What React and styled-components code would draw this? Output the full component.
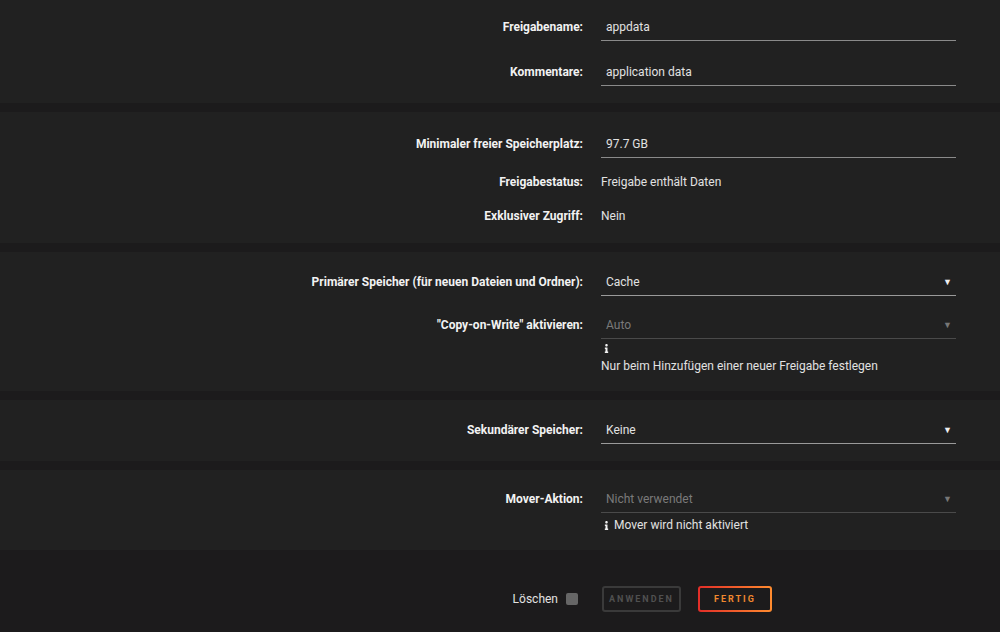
import styled, { createGlobalStyle } from "styled-components"
import { FaInfo } from "react-icons/fa"

const GlobalStyle = createGlobalStyle`
    html, body {
        margin: 0;
        padding: 0;
        background-color: #1c1b1c;
        font-family: Roboto, "Noto Sans", sans-serif;
    }
`

function Field({ label, value }) {
    return (
        <Row>
            <Label>{label}:</Label>
            <Input defaultValue={value} />
        </Row>
    )
}

function Picker({ label, value, disabled, children }) {
    return (
        <Row>
            <Label>{label}:</Label>
            <div>
                <Select disabled={disabled}>
                    <span>{value}</span>
                    <Arrow disabled={disabled}>▼</Arrow>
                </Select>
                {children}
            </div>
        </Row>
    )
}

function Plain({ label, value }) {
    return (
        <Row short>
            <Label short>{label}:</Label>
            <Value>{value}</Value>
        </Row>
    )
}

export default function App() {
    return (
        <>
            <GlobalStyle />
            <Page>
                <Section top={13} gap={17}>
                    <Field label="Freigabename" value="appdata" />
                    <Field label="Kommentare" value="application data" />
                </Section>
                <Section top={18} gap={15} bottom={17}>
                    <Field label="Minimaler freier Speicherplatz" value="97.7 GB" />
                    <Plain label="Freigabestatus" value="Freigabe enthält Daten" />
                    <Plain label="Exklusiver Zugriff" value="Nein" />
                </Section>
                <Section top={16} gap={15}>
                    <Picker label="Primärer Speicher (für neuen Dateien und Ordner)" value="Cache" />
                    <Picker label={'"Copy-on-Write" aktivieren'} value="Auto" disabled>
                        <Note stacked>
                            <FaInfo size={9} />
                            <span>Nur beim Hinzufügen einer neuer Freigabe festlegen</span>
                        </Note>
                    </Picker>
                </Section>
                <Section top={16}>
                    <Picker label="Sekundärer Speicher" value="Keine" />
                </Section>
                <Section top={15}>
                    <Picker label="Mover-Aktion" value="Nicht verwendet" disabled>
                        <Note>
                            <FaInfo size={9} />
                            <span>Mover wird nicht aktiviert</span>
                        </Note>
                    </Picker>
                </Section>
                <Footer>
                    <Delete>
                        Löschen
                        <Check />
                    </Delete>
                    <Buttons>
                        <Button disabled>Anwenden</Button>
                        <Button primary>Fertig</Button>
                    </Buttons>
                </Footer>
            </Page>
        </>
    )
}

const Page = styled.div`
    width: 100%;
    min-height: 632px;
    background-color: #1c1b1c;
    display: flex;
    flex-direction: column;
    gap: 9px;
`

const Section = styled.div`
    background-color: #212121;
    padding: ${p => p.top || 15}px 0 ${p => p.bottom || 17}px;
    display: flex;
    flex-direction: column;
    gap: ${p => p.gap || 15}px;
`

const Row = styled.div`
    display: grid;
    grid-template-columns: 583px 355px;
    column-gap: 18px;
    align-items: start;
    min-height: ${p => p.short ? 19 : 28}px;
`

const Label = styled.div`
    text-align: right;
    font-size: 12px;
    font-weight: 700;
    color: #f2f2f2;
    line-height: ${p => p.short ? 19 : 28}px;
    white-space: nowrap;
`

const Value = styled.div`
    font-size: 12px;
    color: #e2e2e2;
    line-height: 19px;
`

const Input = styled.input`
    box-sizing: border-box;
    width: 100%;
    height: 28px;
    padding: 0 5px;
    margin: 0;
    background: transparent;
    border: none;
    border-bottom: 1px solid #8a8a8a;
    color: #e2e2e2;
    font-family: inherit;
    font-size: 12px;
    outline: none;
`

const Select = styled.div`
    box-sizing: border-box;
    height: 28px;
    padding: 0 5px;
    display: flex;
    align-items: center;
    justify-content: space-between;
    border-bottom: 1px solid ${p => p.disabled ? "#4a4a4a" : "#9a9a9a"};
    color: ${p => p.disabled ? "#7a7a7a" : "#e2e2e2"};
    font-size: 12px;
`

const Arrow = styled.span`
    font-size: 9px;
    margin-right: -1px;
    color: ${p => p.disabled ? "#777" : "#eee"};
`

const Note = styled.div`
    display: flex;
    flex-direction: ${p => p.stacked ? "column" : "row"};
    align-items: ${p => p.stacked ? "flex-start" : "center"};
    gap: ${p => p.stacked ? 5 : 3}px;
    margin-top: 4px;
    font-size: 12px;
    color: #e2e2e2;
    line-height: 16px;
    svg {
        color: #f2f2f2;
        margin-left: 1px;
        margin-top: ${p => p.stacked ? 1 : 0}px;
    }
`

const Footer = styled.div`
    flex: 1;
    margin-top: -9px;
    padding-top: 36px;
    display: grid;
    grid-template-columns: 578px auto;
    column-gap: 24px;
    align-items: center;
    align-content: start;
`

const Delete = styled.label`
    display: flex;
    justify-content: flex-end;
    align-items: center;
    gap: 8px;
    font-size: 12px;
    color: #e2e2e2;
`

const Check = styled.span`
    width: 12px;
    height: 12px;
    border-radius: 2px;
    background-color: #666;
`

const Buttons = styled.div`
    display: flex;
    gap: 17px;
`

const Button = styled.button`
    height: 26px;
    padding: 0 ${p => p.primary ? 14 : 5}px;
    border-radius: 3px;
    font-family: inherit;
    font-size: 9px;
    font-weight: 700;
    letter-spacing: 2px;
    text-transform: uppercase;
    color: ${p => p.primary ? "#f0882f" : "#505050"};
    border: 2px solid ${p => p.primary ? "transparent" : "#3a3a3a"};
    background: ${p => p.primary
        ? "linear-gradient(#1c1b1c, #1c1b1c) padding-box, linear-gradient(90deg, #e22d28, #ff8c2f) border-box"
        : "transparent"};
`
